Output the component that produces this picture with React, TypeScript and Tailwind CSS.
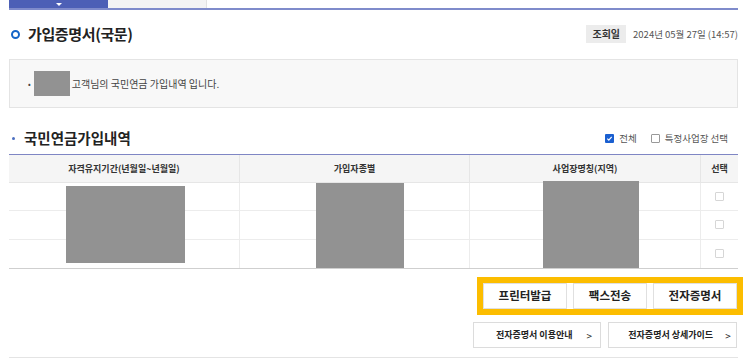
import React from 'react';

const font = { fontFamily: '"Noto Sans CJK KR", "Noto Sans", sans-serif' };

const Redact = ({ className }: { className: string }) => (
    <div className={`absolute bg-[#929292] ${className}`}></div>
);

const SmallBox = () => (
    <div className="h-[9px] w-[9px] border border-[#d6d6d6] rounded-[1px] bg-white"></div>
);

export default function App() {
    const rows = [0, 1, 2];
    return (
        <div className="w-[750px] h-[359px] bg-white overflow-hidden text-[#333]" style={font}>
            <div className="mx-[9px] w-[729px]">
                {/* tabs */}
                <div className="flex h-[8px] border-b-[2px] border-[#7f8bcb] box-content">
                    <div className="w-[99px] bg-[#4c5fb6] flex items-center justify-center">
                        <div className="w-0 h-0 border-l-[3px] border-r-[3px] border-t-[3px] border-l-transparent border-r-transparent border-t-white"></div>
                    </div>
                    <div className="w-[99px] bg-[#f4f4f4] border-r border-[#e2e2e2]"></div>
                </div>

                {/* title */}
                <div className="flex items-center justify-between h-[49px] pb-[1px]">
                    <div className="flex items-center gap-[8px]">
                        <div className="ml-[2px] w-[9px] h-[9px] rounded-full border-[2.5px] border-[#1565c8]"></div>
                        <h1 className="text-[15px] font-bold text-[#222] tracking-tight">가입증명서(국문)</h1>
                    </div>
                    <div className="flex items-center gap-[7px] text-[9.5px]">
                        <span className="bg-[#ececec] px-[6px] h-[18px] leading-[18px] font-bold text-[#333] text-[10px]">조회일</span>
                        <span className="text-[#555]">2024년 05월 27일 (14:57)</span>
                    </div>
                </div>

                {/* info box */}
                <div className="border border-[#e4e4e4] bg-[#f8f8f8] h-[49px] flex items-center pl-[18px] text-[10px] text-[#444]">
                    <span className="text-[8px] mr-[3px]">•</span>
                    <div className="w-[36px] h-[25px] bg-[#929292]"></div>
                    <span className="ml-[2px]">고객님의 국민연금 가입내역 입니다.</span>
                </div>

                {/* section title */}
                <div className="flex items-center justify-between h-[46px] pt-[14px]">
                    <div className="flex items-center gap-[9px]">
                        <span className="ml-[3px] w-[3px] h-[3px] rounded-full bg-[#4c6fc0]"></span>
                        <h2 className="text-[14.5px] font-bold text-[#222]">국민연금가입내역</h2>
                    </div>
                    <div className="flex items-center text-[9.5px] text-[#555] mr-[10px]">
                        <span className="w-[9px] h-[9px] rounded-[1px] bg-[#1a5fd0] flex items-center justify-center">
                            <svg width="7" height="7" viewBox="0 0 8 8"><path d="M1.5 4.2 L3.2 5.8 L6.5 2.2" stroke="white" strokeWidth="1.4" fill="none" /></svg>
                        </span>
                        <span className="ml-[5px]">전체</span>
                        <span className="ml-[14px] w-[9px] h-[9px] rounded-[1px] border border-[#999] bg-white"></span>
                        <span className="ml-[5px]">특정사업장 선택</span>
                    </div>
                </div>

                {/* table */}
                <div className="relative border-t-[1.5px] border-[#7f86c4] border-b border-b-[#cfcfcf]">
                    <div className="grid grid-cols-[231px_230px_231px_37px] h-[27.5px] bg-[#f5f5f5] border-b border-[#e6e6e6] text-[9px] font-bold text-[#333]">
                        <div className="flex items-center justify-center border-r border-[#e6e6e6]">자격유지기간(년월일~년월일)</div>
                        <div className="flex items-center justify-center border-r border-[#e6e6e6]">가입자종별</div>
                        <div className="flex items-center justify-center border-r border-[#e6e6e6]">사업장명칭(지역)</div>
                        <div className="flex items-center justify-center">선택</div>
                    </div>
                    {rows.map((r) => (
                        <div key={r} className={`grid grid-cols-[231px_230px_231px_37px] h-[28.5px] ${r < 2 ? 'border-b border-[#ececec]' : ''}`}>
                            <div className="border-r border-[#ececec]"></div>
                            <div className="border-r border-[#ececec]"></div>
                            <div className="border-r border-[#ececec]"></div>
                            <div className="flex items-center justify-center"><SmallBox /></div>
                        </div>
                    ))}
                    <Redact className="left-[57px] top-[31px] w-[119px] h-[77px]" />
                    <Redact className="left-[307px] top-[28px] w-[88px] h-[85px]" />
                    <Redact className="left-[534px] top-[26px] w-[96px] h-[87px]" />
                </div>

                {/* buttons */}
                <div className="flex justify-end mt-[8px] -mr-[5px]">
                    <div className="border-[6px] border-[#fcbd00] bg-white flex gap-[6px] h-[38px] w-[266px]">
                        <button className="w-[84px] border border-[#e0e0e0] text-[11.5px] font-bold text-[#222]">프린터발급</button>
                        <button className="w-[74px] border border-[#e0e0e0] text-[11.5px] font-bold text-[#222]">팩스전송</button>
                        <button className="w-[84px] border border-[#e0e0e0] text-[11.5px] font-bold text-[#222]">전자증명서</button>
                    </div>
                </div>
                <div className="flex justify-end gap-[7px] mt-[7px] mr-[1px]">
                    <button className="w-[128px] h-[26px] border border-[#dcdcdc] bg-white text-[9px] font-bold text-[#222] flex items-center justify-center gap-[14px] pl-[14px]">
                        <span>전자증명서 이용안내</span>
                        <span className="font-normal text-[10px]">&gt;</span>
                    </button>
                    <button className="w-[129px] h-[26px] border border-[#dcdcdc] bg-white text-[9px] font-bold text-[#222] flex items-center justify-center gap-[12px] pl-[14px]">
                        <span>전자증명서 상세가이드</span>
                        <span className="font-normal text-[10px]">&gt;</span>
                    </button>
                </div>
                <div className="mt-[9px] border-b border-[#e4e4e4]"></div>
            </div>
        </div>
    );
}
